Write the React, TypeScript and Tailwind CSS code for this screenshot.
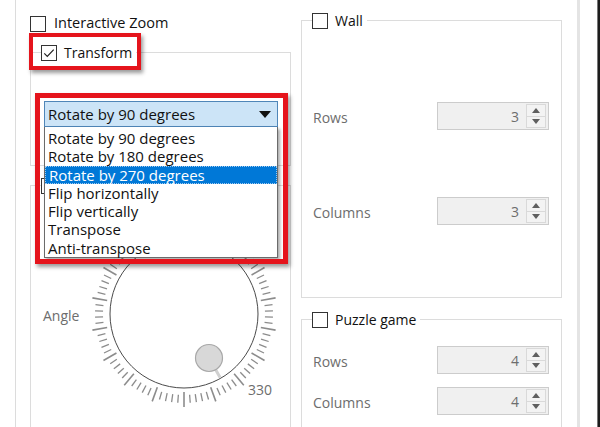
import React from "react";

const transformOptions = [
	"Rotate by 90 degrees",
	"Rotate by 180 degrees",
	"Rotate by 270 degrees",
	"Flip horizontally",
	"Flip vertically",
	"Transpose",
	"Anti-transpose",
];

function CheckBox({ checked = false }: { checked?: boolean }) {
	return (
		<span className="flex h-4 w-4 shrink-0 items-center justify-center border border-[#333333] bg-white">
			{checked && (
				<svg viewBox="0 0 14 14" className="h-[12px] w-[12px]">
					<path
						d="M1.5 7.5 L5 11 L12.5 3"
						fill="none"
						stroke="#222222"
						strokeWidth="1.4"
					/>
				</svg>
			)}
		</span>
	);
}

/** Checkbox title that sits on the top border of a group box */
function Legend({ label, checked }: { label?: string; checked?: boolean }) {
	return (
		<div className="-mt-[9px] ml-[10px] flex h-[18px] w-fit shrink-0 items-center gap-[7px] bg-white pr-[4px] text-[#111111]">
			<CheckBox checked={checked} />
			{label && <span className="leading-none">{label}</span>}
		</div>
	);
}

function SpinBox({ value }: { value: number }) {
	return (
		<div className="flex h-[28px] w-[112px] items-center border border-[#cccccc] bg-[#f0f0f0]">
			<span className="flex-1 pr-[7px] text-right text-[#6d6d6d]">{value}</span>
			<div className="mr-[2px] flex h-[24px] w-[20px] flex-col border border-[#d9d9d9] bg-[#f3f3f3]">
				<div className="flex flex-1 items-center justify-center border-b border-[#d9d9d9]">
					<svg viewBox="0 0 8 5" className="h-[5px] w-[8px]">
						<path d="M0 5 L4 0 L8 5 Z" fill="#5f5f5f" />
					</svg>
				</div>
				<div className="flex flex-1 items-center justify-center">
					<svg viewBox="0 0 8 5" className="h-[5px] w-[8px]">
						<path d="M0 0 L8 0 L4 5 Z" fill="#5f5f5f" />
					</svg>
				</div>
			</div>
		</div>
	);
}

function FieldRow({ label, value, className = "" }: { label: string; value: number; className?: string }) {
	return (
		<div className={`flex shrink-0 items-center justify-between pl-[11px] pr-[12px] ${className}`}>
			<span className="pt-[2px] text-[#6d6d6d]">{label}</span>
			<SpinBox value={value} />
		</div>
	);
}

function Dial() {
	// ticks every 4 degrees, long ones every 20
	const ticks = Array.from({ length: 90 }, (_, i) => i);
	const cx = 100;
	const cy = 100;
	const knobAngle = Math.atan2(44, 25);
	const kx = Math.cos(knobAngle);
	const ky = Math.sin(knobAngle);

	return (
		<svg width="200" height="200" viewBox="0 0 200 200" className="shrink-0">
			{ticks.map((i) => {
				const a = ((i * 4 + 90) * Math.PI) / 180;
				const major = i % 5 === 0;
				const r1 = major ? 78 : 81;
				const r2 = major ? 93 : 89;
				return (
					<line
						key={i}
						x1={cx + Math.cos(a) * r1}
						y1={cy + Math.sin(a) * r1}
						x2={cx + Math.cos(a) * r2}
						y2={cy + Math.sin(a) * r2}
						stroke="#8c8c8c"
						strokeWidth={major ? 1.6 : 1.3}
					/>
				);
			})}
			<circle cx={cx} cy={cy} r="74" fill="white" stroke="#4a4a4a" strokeWidth="1" />
			<line
				x1={cx + kx * 63}
				y1={cy + ky * 63}
				x2={cx + kx * 73}
				y2={cy + ky * 73}
				stroke="#d0d0d0"
				strokeWidth="3"
			/>
			<circle
				cx={cx + 25}
				cy={cy + 44}
				r="13.5"
				fill="#d8d8d8"
				stroke="#a8a8a8"
				strokeWidth="1.2"
			/>
			<text
				x="176"
				y="181"
				textAnchor="middle"
				fill="#6d6d6d"
				fontSize="14"
				fontFamily="Open Sans, sans-serif"
			>
				330
			</text>
		</svg>
	);
}

function TransformCombo() {
	return (
		<div className="relative ml-[13px] mt-[39px] w-[234px] shrink-0 text-[15px]">
			<div className="flex h-[26px] items-center justify-between border border-[#4f86b8] bg-[#cce4f7] pl-[3px] pr-[6px] text-[#111111]">
				<span>Rotate by 90 degrees</span>
				<svg viewBox="0 0 12 7" className="h-[7px] w-[12px]">
					<path d="M0 0 L12 0 L6 7 Z" fill="#111111" />
				</svg>
			</div>
			{/* open dropdown list */}
			<ul className="absolute left-0 top-full z-10 w-[234px] border border-t-0 border-[#6b6b6b] bg-white pt-[2px] shadow-[2px_2px_3px_rgba(0,0,0,0.35)]">
				{transformOptions.map((opt, i) => (
					<li
						key={opt}
						className={`flex h-[18.3px] items-center pl-[3px] ${
							i === 2
								? "border border-dotted border-[#9ec9ef] bg-[#0078d7] text-white"
								: "text-[#111111]"
						}`}
					>
						{opt}
					</li>
				))}
			</ul>
		</div>
	);
}

export default function App() {
	return (
		<div className="relative flex h-[427px] w-[600px] overflow-hidden bg-white pl-[15px] font-['Open_Sans','Noto_Sans',sans-serif] text-[14px]">
			<div className="flex shrink-0 gap-[10px] border-l border-[#dcdcdc] pl-[14px]">
				{/* left column */}
				<div className="flex w-[261px] flex-col pt-[15px]">
					<div className="flex h-[17px] shrink-0 items-center gap-[8px] text-[14.5px] text-[#111111]">
						<CheckBox />
						<span className="leading-none">Interactive Zoom</span>
					</div>

					<div className="mt-[20px] flex h-[114px] shrink-0 flex-col border border-[#dcdcdc]">
						<Legend label="Transform" checked />
						<TransformCombo />
					</div>

					<div className="mt-[19px] flex h-[260px] shrink-0 flex-col border border-[#dcdcdc]">
						<Legend />
						<div className="flex items-start">
							<div className="mt-[111px] w-[53px] shrink-0 pl-[12px] leading-[20px] text-[#6d6d6d]">
								Angle
							</div>
							<div className="mt-[19px]">
								<Dial />
							</div>
						</div>
					</div>
				</div>

				{/* right column */}
				<div className="flex w-[261px] flex-col pt-[20px]">
					<div className="flex h-[278px] shrink-0 flex-col border border-[#dcdcdc]">
						<Legend label="Wall" />
						<FieldRow label="Rows" value={3} className="mt-[72px]" />
						<FieldRow label="Columns" value={3} className="mt-[67px]" />
					</div>
					<div className="mt-[21px] flex h-[200px] shrink-0 flex-col border border-[#dcdcdc]">
						<Legend label="Puzzle game" />
						<FieldRow label="Rows" value={4} className="mt-[17px]" />
						<FieldRow label="Columns" value={4} className="mt-[13px]" />
					</div>
				</div>
			</div>

			{/* window edge on the right */}
			<div className="ml-[15px] w-[3px] shrink-0 bg-[#e4e4e4]" />
			<div className="flex-1" />
			<div className="w-[3px] shrink-0 border-l border-[#777777] bg-[#1c1c1c]" />

			{/* red annotation frames */}
			<div className="absolute left-[29px] top-[33px] z-20 h-[37px] w-[112px] border-4 border-[#e5141c] shadow-[2px_3px_4px_rgba(0,0,0,0.4)]" />
			<div className="absolute left-[35px] top-[93px] z-20 h-[171px] w-[253px] border-[5px] border-[#e5141c] shadow-[2px_3px_4px_rgba(0,0,0,0.4)]" />
		</div>
	);
}
